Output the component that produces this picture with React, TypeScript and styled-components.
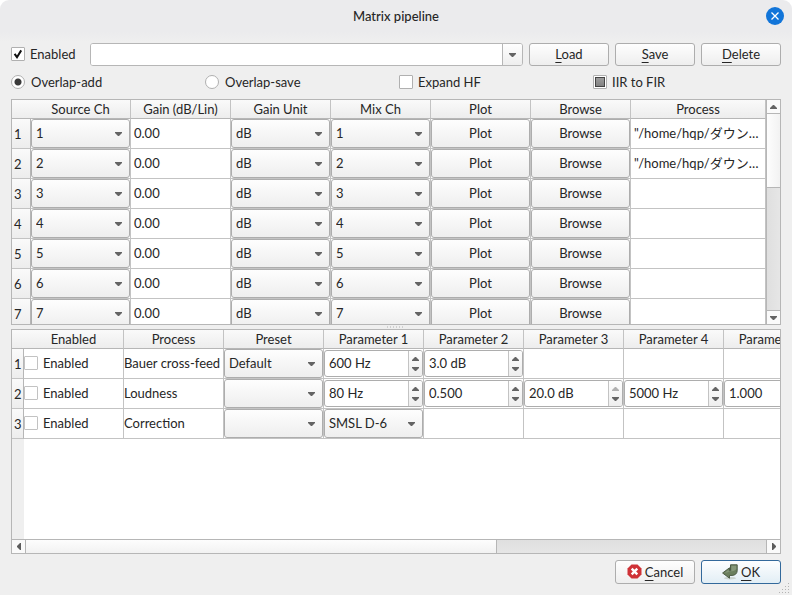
import React, { useEffect, useId, useRef } from "react";
import styled, { createGlobalStyle, css } from "styled-components";

const line = "#b6b6b6";
const grid = "#c3c3c3";
const face = "linear-gradient(#fefefe, #eeeeee)";

const GlobalStyle = createGlobalStyle`
  * { box-sizing: border-box; }
  body { margin: 0; background: #fff; }
  body, button, input, select {
    font-family: "Lato", "Noto Sans CJK JP", sans-serif;
    font-size: 13px;
    line-height: 18px;
    color: #262626;
  }
`;

const Dialog = styled.main`
  position: relative;
  display: flex;
  flex-direction: column;
  height: 100vh;
  background: linear-gradient(#ebebed 32px, #efefef 42px);
  border-radius: 9px 9px 0 0;
  overflow: hidden;
`;

const TitleBar = styled.header`
  display: grid;
  grid-template-columns: 1fr auto 1fr;
  align-items: center;
  height: 32px;
  padding: 0 8px;
  flex: none;
`;

const Title = styled.h1`
  grid-column: 2;
  margin: 0;
  font-size: 13px;
  font-weight: 500;
`;

const CloseButton = styled.button`
  justify-self: end;
  width: 18px;
  height: 18px;
  padding: 0;
  border: 0;
  border-radius: 50%;
  background: #1275d9;
  display: grid;
  place-items: center;
`;

const Body = styled.div`
  flex: 1;
  min-height: 0;
  display: flex;
  flex-direction: column;
  gap: 6px;
  padding: 11px;
`;

const Toolbar = styled.div`
  display: flex;
  gap: 6px;
  flex: none;
`;

const OptionsGrid = styled.div`
  display: grid;
  grid-template-columns: repeat(4, 1fr);
  gap: 6px;
  height: 21px;
  flex: none;
`;

const OptionLabel = styled.label<{ $width?: number }>`
  display: flex;
  align-items: center;
  gap: 5px;
  padding-bottom: 2px;
  white-space: nowrap;
  ${(p) => p.$width && css`width: ${p.$width}px;`}
`;

const RadioLabel = styled(OptionLabel)`
  gap: 6px;
`;

const MarkBox = styled.span`
  position: relative;
  display: grid;
  flex: none;
`;

const Mark = styled.input<{ $faint?: boolean }>`
  appearance: none;
  margin: 0;
  width: 14px;
  height: 14px;
  background: #fff;
  border: 1px solid ${(p) => (p.$faint ? "#c2c2c2" : "#b0b0b0")};
  border-radius: 1px;
  &[type="radio"] {
    border-radius: 50%;
  }
  &[type="radio"]:checked {
    background: radial-gradient(circle, #3a3a3a 3px, #fff 4px);
  }
  &:indeterminate[type="checkbox"] {
    background: linear-gradient(#a2a2a2, #7c7c7c);
    box-shadow: inset 0 0 0 1px #fff, inset 0 0 0 2px #444;
  }
`;

const MarkSvg = styled.svg`
  position: absolute;
  inset: 0;
  pointer-events: none;
`;

const PushButton = styled.button<{ $primary?: boolean; $tall?: boolean }>`
  display: flex;
  align-items: center;
  justify-content: center;
  gap: 3px;
  width: 80px;
  height: ${(p) => (p.$tall ? 24 : 23)}px;
  padding: 0 0 1px;
  border: 1px solid ${(p) => (p.$primary ? "#33699b" : "#adadad")};
  border-radius: 3px;
  background: ${(p) => (p.$primary ? "linear-gradient(#fdfeff, #e2eef5)" : face)};
`;

const Mnemonic = styled.span`
  text-decoration: underline;
  text-underline-offset: 3px;
  text-decoration-skip-ink: none;
`;

const EditCombo = styled.div`
  flex: 1;
  display: flex;
  height: 23px;
  border: 1px solid ${line};
  border-radius: 3px;
  overflow: hidden;
  background: #fff;
`;

const EditComboInput = styled.input`
  flex: 1;
  min-width: 0;
  border: 0;
  padding: 0 4px;
  outline: 0;
`;

const EditComboButton = styled.button`
  width: 20px;
  padding: 0;
  border: 0;
  border-left: 1px solid ${line};
  background: ${face};
  display: grid;
  place-items: center;
`;

const Panel = styled.section<{ $basis: number; $column?: boolean }>`
  flex: 1 1 ${(p) => p.$basis}px;
  min-height: 0;
  display: flex;
  flex-direction: ${(p) => (p.$column ? "column" : "row")};
  border: 1px solid ${line};
  background: #fff;
`;

const Panels = styled.div`
  flex: 1;
  min-height: 0;
  display: flex;
  flex-direction: column;
`;

const Splitter = styled.div`
  height: 4px;
  flex: none;
  display: flex;
  align-items: center;
  justify-content: center;
`;

const Viewport = styled.div<{ $gutter: number }>`
  flex: 1;
  min-width: 0;
  min-height: 0;
  overflow: hidden;
  background: linear-gradient(to right, #efefef ${(p) => p.$gutter}px, #fff ${(p) => p.$gutter}px);
`;

const Grid = styled.table`
  table-layout: fixed;
  width: 100%;
  border-collapse: separate;
  border-spacing: 0;
`;

const WideGrid = styled(Grid)`
  width: 812px;
`;

const Col = styled.col<{ $w?: number }>`
  ${(p) => p.$w && css`width: ${p.$w}px;`}
`;

const HeadCell = styled.th<{ $open?: boolean }>`
  height: 19px;
  padding: 0;
  font-weight: 400;
  text-align: center;
  background: linear-gradient(#fafafa, #ededed);
  border-bottom: 1px solid ${line};
  border-right: ${(p) => (p.$open ? "0" : `1px solid ${grid}`)};
`;

const RowHead = styled.th`
  height: 30px;
  padding: 0 0 0 2px;
  font-weight: 400;
  text-align: left;
  background: linear-gradient(#fafafa, #ededed);
  border-bottom: 1px solid ${grid};
  border-right: 1px solid ${line};
`;

const Cell = styled.td`
  height: 30px;
  padding: 0;
  border-bottom: 1px solid ${grid};
  border-right: 1px solid ${grid};
  white-space: nowrap;
  overflow: hidden;
`;

const TextCell = styled(Cell)<{ $pad?: number }>`
  padding: 0 0 2px ${(p) => p.$pad ?? 0}px;
`;

const ComboFrame = styled.div`
  position: relative;
  height: 29px;
`;

const ComboSelect = styled.select`
  appearance: none;
  display: block;
  width: 100%;
  height: 100%;
  padding: 0 20px 2px 4px;
  border: 1px solid #adadad;
  border-radius: 3px;
  background: ${face};
`;

const ComboArrow = styled.span`
  position: absolute;
  right: 8px;
  top: 0;
  bottom: 0;
  display: grid;
  place-items: center;
  pointer-events: none;
`;

const CellButton = styled.button`
  display: block;
  width: 100%;
  height: 29px;
  padding: 0 0 2px;
  border: 1px solid #adadad;
  border-radius: 3px;
  background: ${face};
`;

const SpinFrame = styled.div`
  display: flex;
  height: 27px;
  margin: 1px 0;
  border: 1px solid #adadad;
  border-radius: 3px;
  overflow: hidden;
  background: #fff;
`;

const SpinInput = styled.input`
  flex: 1;
  min-width: 0;
  padding: 0 4px 2px;
  border: 0;
  outline: 0;
  background: transparent;
`;

const SpinButtons = styled.div`
  width: 14px;
  display: grid;
  grid-template-rows: 10px 10px;
  align-content: center;
  border-left: 1px solid ${grid};
  background: ${face};
`;

const SpinButton = styled.button`
  display: grid;
  place-items: center;
  padding: 0;
  border: 0;
  background: transparent;
`;

const ScrollBar = styled.div<{ $horizontal?: boolean }>`
  flex: none;
  display: flex;
  background: linear-gradient(${(p) => (p.$horizontal ? "#dfdfdf, #e6e6e6" : "to right, #dfdfdf, #e6e6e6")});
  ${(p) =>
    p.$horizontal
      ? css`flex-direction: row; height: 14px; border-top: 1px solid ${line};`
      : css`flex-direction: column; width: 14px; border-left: 1px solid ${line};`}
`;

const ScrollButton = styled.button`
  flex: none;
  width: 13px;
  height: 13px;
  padding: 0;
  border: 0;
  display: grid;
  place-items: center;
  background: #fafafa;
`;

const Thumb = styled.div<{ $share: number; $horizontal?: boolean }>`
  flex: ${(p) => p.$share} 1 0;
  border: solid ${line};
  border-width: ${(p) => (p.$horizontal ? "0 1px" : "1px 0")};
  background: linear-gradient(${(p) => (p.$horizontal ? "#fdfdfd, #f2f2f2" : "to right, #fdfdfd, #f2f2f2")});
`;

const Track = styled.div<{ $share: number; $horizontal?: boolean }>`
  flex: ${(p) => p.$share} 1 0;
  border: solid ${line};
  border-width: ${(p) => (p.$horizontal ? "0 1px 0 0" : "0 0 1px")};
`;

const Footer = styled.footer`
  display: flex;
  justify-content: flex-end;
  gap: 6px;
  flex: none;
`;

const Grip = styled.svg`
  position: absolute;
  right: 1px;
  bottom: 1px;
`;

const arrowPaths = {
  down: "M0 0H7V1L4 4H3L0 1Z",
  up: "M0 4H7V3L4 0H3L0 3Z",
};

function Arrow({ dir, faint }: { dir: "down" | "up"; faint?: boolean }) {
  return (
    <svg width="7" height="4" viewBox="0 0 7 4" aria-hidden="true">
      <path d={arrowPaths[dir]} fill={faint ? "#b0b0b0" : "#646464"} />
    </svg>
  );
}

function SideArrow({ dir }: { dir: "left" | "right" }) {
  return (
    <svg width="4" height="7" viewBox="0 0 4 7" aria-hidden="true">
      <path d={dir === "left" ? "M4 0V7H3L0 4V3L3 0Z" : "M0 0V7H1L4 4V3L1 0Z"} fill="#5c5c5c" />
    </svg>
  );
}

function CheckBox({ label, checked, partial, faint, width }: {
  label: string; checked?: boolean; partial?: boolean; faint?: boolean; width?: number;
}) {
  const ref = useRef<HTMLInputElement>(null);
  useEffect(() => {
    if (ref.current) ref.current.indeterminate = !!partial;
  }, [partial]);
  return (
    <OptionLabel $width={width}>
      <MarkBox>
        <Mark ref={ref} type="checkbox" defaultChecked={checked} $faint={faint} />
        {checked && (
          <MarkSvg width="14" height="14" viewBox="0 0 14 14" aria-hidden="true">
            <path d="M3.6 6.8L6 10.2L10.2 3.4" fill="none" stroke="#111" strokeWidth="2" />
          </MarkSvg>
        )}
      </MarkBox>
      {label}
    </OptionLabel>
  );
}

function Radio({ label, checked }: { label: string; checked?: boolean }) {
  return (
    <RadioLabel>
      <Mark type="radio" name="overlap" defaultChecked={checked} />
      {label}
    </RadioLabel>
  );
}

function Combo({ label, value }: { label: string; value: string }) {
  return (
    <ComboFrame>
      <ComboSelect aria-label={label} defaultValue={value}>
        <option>{value}</option>
      </ComboSelect>
      <ComboArrow><Arrow dir="down" /></ComboArrow>
    </ComboFrame>
  );
}

function Spin({ label, value, atMax }: { label: string; value: string; atMax?: boolean }) {
  const id = useId();
  return (
    <SpinFrame>
      <SpinInput id={id} aria-label={label} defaultValue={value} />
      <SpinButtons>
        <SpinButton aria-label={`Increase ${label}`} aria-controls={id} disabled={atMax}>
          <Arrow dir="up" faint={atMax} />
        </SpinButton>
        <SpinButton aria-label={`Decrease ${label}`} aria-controls={id}>
          <Arrow dir="down" />
        </SpinButton>
      </SpinButtons>
    </SpinFrame>
  );
}

const channels = [1, 2, 3, 4, 5, 6, 7];
const channelHeads = ["Source Ch", "Gain (dB/Lin)", "Gain Unit", "Mix Ch", "Plot", "Browse", "Process"];
const pluginHeads = ["Enabled", "Process", "Preset", "Parameter 1", "Parameter 2", "Parameter 3", "Parameter 4", "Parameter 5"];

type Param = { kind: "spin" | "combo"; value: string; atMax?: boolean };
const plugins: { name: string; preset: string; params: Param[] }[] = [
  { name: "Bauer cross-feed", preset: "Default", params: [{ kind: "spin", value: "600 Hz" }, { kind: "spin", value: "3.0 dB" }] },
  {
    name: "Loudness",
    preset: "",
    params: [
      { kind: "spin", value: "80 Hz" },
      { kind: "spin", value: "0.500" },
      { kind: "spin", value: "20.0 dB", atMax: true },
      { kind: "spin", value: "5000 Hz" },
      { kind: "spin", value: "1.000" },
    ],
  },
  { name: "Correction", preset: "", params: [{ kind: "combo", value: "SMSL D-6" }] },
];

function ChannelTable() {
  return (
    <Grid>
      <colgroup>
        <Col $w={19} />
        {[100, 100, 100, 100, 100, 100].map((w, i) => <Col key={i} $w={w} />)}
        <Col />
      </colgroup>
      <thead>
        <tr>
          <HeadCell as="td" $open />
          {channelHeads.map((h) => <HeadCell key={h} scope="col">{h}</HeadCell>)}
        </tr>
      </thead>
      <tbody>
        {channels.map((n) => (
          <tr key={n}>
            <RowHead scope="row">{n}</RowHead>
            <Cell><Combo label={`Source channel ${n}`} value={String(n)} /></Cell>
            <TextCell $pad={3}>0.00</TextCell>
            <Cell><Combo label={`Gain unit ${n}`} value="dB" /></Cell>
            <Cell><Combo label={`Mix channel ${n}`} value={String(n)} /></Cell>
            <Cell><CellButton>Plot</CellButton></Cell>
            <Cell><CellButton>Browse</CellButton></Cell>
            <TextCell $pad={3}>{n <= 2 ? "\"/home/hqp/ダウン…" : ""}</TextCell>
          </tr>
        ))}
      </tbody>
    </Grid>
  );
}

function PluginTable() {
  return (
    <WideGrid>
      <colgroup>
        <Col $w={12} />
        {pluginHeads.map((h) => <Col key={h} $w={100} />)}
      </colgroup>
      <thead>
        <tr>
          <HeadCell as="td" $open />
          {pluginHeads.map((h) => <HeadCell key={h} scope="col">{h}</HeadCell>)}
        </tr>
      </thead>
      <tbody>
        {plugins.map((p, i) => (
          <tr key={p.name}>
            <RowHead scope="row">{i + 1}</RowHead>
            <Cell><CheckBox label="Enabled" faint /></Cell>
            <TextCell>{p.name}</TextCell>
            <Cell><Combo label={`${p.name} preset`} value={p.preset} /></Cell>
            {[0, 1, 2, 3, 4].map((k) => {
              const param = p.params[k];
              const label = `${p.name} parameter ${k + 1}`;
              return (
                <Cell key={k}>
                  {param?.kind === "spin" && <Spin label={label} value={param.value} atMax={param.atMax} />}
                  {param?.kind === "combo" && <Combo label={label} value={param.value} />}
                </Cell>
              );
            })}
          </tr>
        ))}
      </tbody>
    </WideGrid>
  );
}

export default function App() {
  return (
    <>
      <GlobalStyle />
      <Dialog>
        <TitleBar>
          <Title>Matrix pipeline</Title>
          <CloseButton aria-label="Close">
            <svg width="8" height="8" viewBox="0 0 8 8" aria-hidden="true">
              <path d="M0.5 0.5L7.5 7.5M7.5 0.5L0.5 7.5" stroke="#fff" strokeWidth="1.3" />
            </svg>
          </CloseButton>
        </TitleBar>
        <Body>
          <Toolbar>
            <CheckBox label="Enabled" checked width={73} />
            <EditCombo>
              <EditComboInput aria-label="Configuration name" />
              <EditComboButton aria-label="Show configurations"><Arrow dir="down" /></EditComboButton>
            </EditCombo>
            <PushButton><span><Mnemonic>L</Mnemonic>oad</span></PushButton>
            <PushButton><span><Mnemonic>S</Mnemonic>ave</span></PushButton>
            <PushButton><span><Mnemonic>D</Mnemonic>elete</span></PushButton>
          </Toolbar>
          <OptionsGrid>
            <Radio label="Overlap-add" checked />
            <Radio label="Overlap-save" />
            <CheckBox label="Expand HF" />
            <CheckBox label="IIR to FIR" partial />
          </OptionsGrid>
          <Panels>
            <Panel $basis={226}>
              <Viewport $gutter={19}><ChannelTable /></Viewport>
              <ScrollBar>
                <ScrollButton aria-label="Scroll up"><Arrow dir="up" /></ScrollButton>
                <Thumb $share={74} />
                <Track $share={123} />
                <ScrollButton aria-label="Scroll down"><Arrow dir="down" /></ScrollButton>
              </ScrollBar>
            </Panel>
            <Splitter>
              <svg width="18" height="2" viewBox="0 0 18 2" aria-hidden="true">
                <path d="M0 1H18" stroke="#b0b0b0" strokeDasharray="1 2" />
              </svg>
            </Splitter>
            <Panel $basis={225} $column>
              <Viewport $gutter={12}><PluginTable /></Viewport>
              <ScrollBar $horizontal>
                <ScrollButton aria-label="Scroll left"><SideArrow dir="left" /></ScrollButton>
                <Thumb $share={471} $horizontal />
                <Track $share={270} $horizontal />
                <ScrollButton aria-label="Scroll right"><SideArrow dir="right" /></ScrollButton>
              </ScrollBar>
            </Panel>
          </Panels>
          <Footer>
            <PushButton $tall>
              <svg width="15" height="15" viewBox="0 0 15 15" aria-hidden="true">
                <path d="M4.5 0.5H10.5L14.5 4.5V10.5L10.5 14.5H4.5L0.5 10.5V4.5Z" fill="#cf3237" />
                <path d="M4.7 4.7L10.3 10.3M10.3 4.7L4.7 10.3" stroke="#fff" strokeWidth="2.4" />
              </svg>
              <span><Mnemonic>C</Mnemonic>ancel</span>
            </PushButton>
            <PushButton $tall $primary>
              <svg width="16" height="16" viewBox="0 0 16 16" aria-hidden="true">
                <ellipse cx="8" cy="14.2" rx="6" ry="1.2" fill="#cbd4d0" />
                <path d="M8.5 0.8H15.2V6.5C15.2 9.5 13 11.4 10 11.4H7.5V14.2L0.6 9L7.5 3.8V6.6H8.5Z" fill="#6b7f5e" stroke="#4d5c45" strokeLinejoin="round" />
                <path d="M9.4 1.8H14.3V5C12.5 7.4 9 7.6 2.6 8.8L6.6 5.8V7.5H9.4Z" fill="#98a98c" opacity="0.6" />
              </svg>
              <span><Mnemonic>O</Mnemonic>K</span>
            </PushButton>
          </Footer>
        </Body>
        <Grip width="12" height="12" viewBox="0 0 12 12" aria-hidden="true">
          <path d="M9 1.5H12M6 4.5H12M3 7.5H12M0 10.5H12" stroke="#b4b4b4" strokeDasharray="1 2" />
        </Grip>
      </Dialog>
    </>
  );
}
